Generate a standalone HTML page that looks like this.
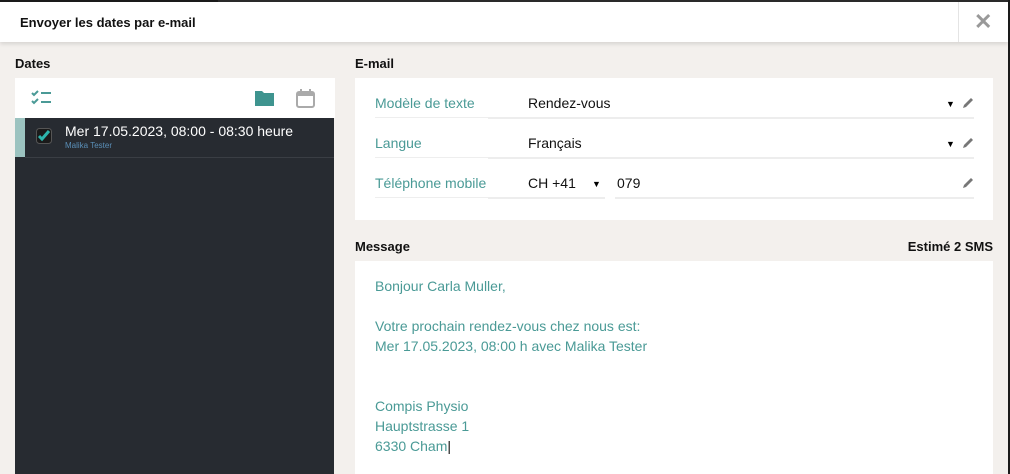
<!DOCTYPE html>
<html><head><style>
body{margin:0;width:1010px;height:474px;overflow:hidden;background:#f3f0ed;font-family:"Liberation Sans",sans-serif;position:relative}
.a{position:absolute}
.hdr{left:0;top:0;width:1008px;height:42px;background:#fff;border-top:2px solid #1a1a1a;box-sizing:border-box;box-shadow:0 2px 4px rgba(0,0,0,.12)}
.t{font-size:13px;font-weight:bold;color:#111}
.lab{font-size:14px;color:#4a9a96}
.val{font-size:14px;color:#111}
.line{height:2px;background:#ededed}
.msg{font-size:14px;color:#4a9a96;line-height:20px}
</style></head><body>
<div class="a hdr"></div>
<div class="a" style="left:218px;top:0;width:790px;height:2px;background:#2a2a2a"></div>
<div class="a" style="right:0;top:0;width:2px;height:474px;background:#1a1a1a"></div>
<div class="a t" style="left:20px;top:15px">Envoyer les dates par e-mail</div>
<div class="a" style="left:958px;top:2px;width:1px;height:40px;background:#e4e4e4"></div>
<div class="a" style="left:974px;top:9px;font-size:22px;color:#999;font-weight:bold">✕</div>

<div class="a t" style="left:15px;top:56px">Dates</div>
<div class="a" style="left:15px;top:78px;width:320px;height:40px;background:#fff"></div>
<svg class="a" style="left:31px;top:89px" width="22" height="18"><path d="M1 4l2 2 4-4M1 12l2 2 4-4" stroke="#4a9a96" stroke-width="2" fill="none"/><path d="M10 4h10M10 13h10" stroke="#4a9a96" stroke-width="2"/></svg>
<svg class="a" style="left:255px;top:89px" width="20" height="17"><path d="M0 2h7l2 2h10v13H0z" fill="#3e948f"/></svg>
<svg class="a" style="left:296px;top:89px" width="19" height="19"><rect x="1" y="3" width="17" height="15" rx="2" fill="none" stroke="#aaa" stroke-width="2"/><rect x="1" y="3" width="17" height="4" fill="#aaa"/><path d="M5 0v4M14 0v4" stroke="#aaa" stroke-width="2"/></svg>
<div class="a" style="left:15px;top:118px;width:319px;height:356px;background:#272b31"></div>
<div class="a" style="left:15px;top:118px;width:10px;height:39px;background:#9cc3c0"></div>
<div class="a" style="left:25px;top:157px;width:309px;height:1px;background:#3a3e44"></div>
<svg class="a" style="left:36px;top:128px" width="16" height="16"><rect x=".5" y=".5" width="15" height="15" rx="3" fill="#1a1a1a" stroke="#555"/><path d="M3 8l3 3 7-8" stroke="#2cb5ac" stroke-width="3" fill="none"/></svg>
<div class="a" style="left:65px;top:123px;font-size:14px;color:#fff">Mer 17.05.2023, 08:00 - 08:30 heure</div>
<div class="a" style="left:65px;top:141px;font-size:8px;color:#5a8fb8">Malika Tester</div>

<div class="a t" style="left:355px;top:56px">E-mail</div>
<div class="a" style="left:355px;top:78px;width:638px;height:142px;background:#fff"></div>
<div class="a lab" style="left:375px;top:95px">Modèle de texte</div>
<div class="a val" style="left:528px;top:95px">Rendez-vous</div>
<div class="a lab" style="left:375px;top:135px">Langue</div>
<div class="a val" style="left:528px;top:135px">Français</div>
<div class="a lab" style="left:375px;top:175px">Téléphone mobile</div>
<div class="a val" style="left:528px;top:175px">CH +41</div>
<div class="a val" style="left:617px;top:175px">079</div>
<div class="a" style="left:375px;top:117px;width:140px;height:1px;background:#eee"></div>
<div class="a line" style="left:488px;top:117px;width:486px"></div>
<div class="a" style="left:375px;top:157px;width:140px;height:1px;background:#eee"></div>
<div class="a line" style="left:488px;top:157px;width:486px"></div>
<div class="a" style="left:375px;top:197px;width:140px;height:1px;background:#eee"></div>
<div class="a line" style="left:488px;top:197px;width:117px"></div>
<div class="a line" style="left:615px;top:197px;width:359px"></div>
<div class="a" style="left:946px;top:99px;font-size:9px">▼</div>
<div class="a" style="left:946px;top:139px;font-size:9px">▼</div>
<div class="a" style="left:592px;top:179px;font-size:9px">▼</div>
<svg class="a" style="left:962px;top:97px" width="12" height="12"><path d="M1 11l1-3 7-7 2 2-7 7z" fill="#777"/></svg>
<svg class="a" style="left:962px;top:137px" width="12" height="12"><path d="M1 11l1-3 7-7 2 2-7 7z" fill="#777"/></svg>
<svg class="a" style="left:962px;top:177px" width="12" height="12"><path d="M1 11l1-3 7-7 2 2-7 7z" fill="#777"/></svg>

<div class="a t" style="left:355px;top:239px">Message</div>
<div class="a t" style="right:17px;top:239px">Estimé 2 SMS</div>
<div class="a" style="left:355px;top:261px;width:638px;height:213px;background:#fff"></div>
<div class="a msg" style="left:375px;top:276px">Bonjour Carla Muller,<br><br>Votre prochain rendez-vous chez nous est:<br>Mer 17.05.2023, 08:00 h avec Malika Tester<br><br><br>Compis Physio<br>Hauptstrasse 1<br>6330 Cham<span style="color:#111">|</span></div>
</body></html>
